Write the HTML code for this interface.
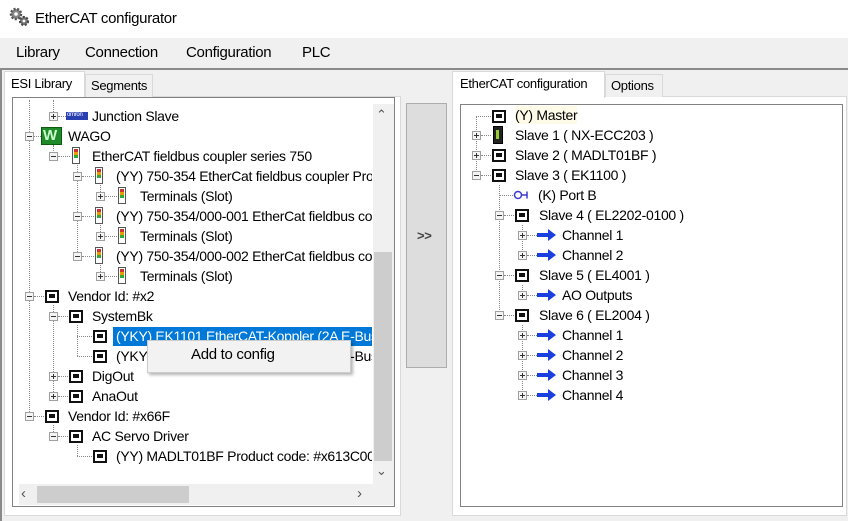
<!DOCTYPE html>
<html><head><meta charset="utf-8"><style>
*{margin:0;padding:0;box-sizing:border-box}
html,body{width:848px;height:521px;overflow:hidden}
body{background:#f0f0f0;font-family:"Liberation Sans",sans-serif;position:relative;color:#000}
.a{position:absolute}
.t{position:absolute;font-size:14px;white-space:nowrap;line-height:18px;letter-spacing:-0.3px}
.ex{position:absolute;width:9px;height:9px;border:1px solid #a0a0a0;background:#f4f4f4}
.ex::before{content:"";position:absolute;left:1px;top:3px;width:5px;height:1px;background:#333}
.ex.p::after{content:"";position:absolute;left:3px;top:1px;width:1px;height:5px;background:#333}
.ch{position:absolute;width:14px;height:13px;border:2px solid #111;background:#fff}
.ch::after{content:"";position:absolute;left:2px;top:2px;right:2px;bottom:3px;background:#111}
.cp{position:absolute;width:8px;height:17px;border:1px solid #555;background:#fff}
.cp::before{content:"";position:absolute;left:1px;top:1px;width:4px;height:9px;background:linear-gradient(#c33 0 3px,#e90 3px 6px,#3a3 6px)}
.hd{position:absolute;border-top:1px dotted #888;height:0}
.vd{position:absolute;border-left:1px dotted #888;width:0}
.ar{position:absolute}
</style></head><body>
<div class="a" style="left:0;top:0;width:848px;height:38px;background:#fff"></div>
<svg class="a" style="left:9px;top:7px" width="22" height="20" viewBox="0 0 22 20"><circle cx="7" cy="7" r="5" fill="#888" stroke="#555" stroke-dasharray="2 1.5" stroke-width="2.5"/><circle cx="7" cy="7" r="1.8" fill="#fff"/><circle cx="15" cy="14" r="4" fill="#777" stroke="#444" stroke-dasharray="2 1.5" stroke-width="2.2"/><circle cx="15" cy="14" r="1.4" fill="#fff"/></svg>
<div class="t" style="left:35px;top:10px;font-size:15px">EtherCAT configurator</div>
<div class="a" style="left:0;top:38px;width:848px;height:31px;background:#f0f0f0"></div>
<div class="t" style="left:16px;top:44px;font-size:15px">Library</div>
<div class="t" style="left:85px;top:44px;font-size:15px">Connection</div>
<div class="t" style="left:186px;top:44px;font-size:15px">Configuration</div>
<div class="t" style="left:302px;top:44px;font-size:15px">PLC</div>
<div class="a" style="left:0;top:68px;width:848px;height:2px;background:#8a8a8a"></div>
<div class="a" style="left:0;top:68px;width:2px;height:453px;background:#8a8a8a"></div>
<div class="a" style="left:4px;top:96px;width:397px;height:420px;background:#fff;border:1px solid #d9d9d9"></div>
<div class="a" style="left:4px;top:71px;width:81px;height:27px;background:#fff;border:1px solid #d9d9d9;border-bottom:none"></div>
<div class="t" style="left:11px;top:75px;font-size:13px">ESI Library</div>
<div class="a" style="left:85px;top:74px;width:68px;height:23px;background:#f0f0f0;border:1px solid #d9d9d9;border-bottom:none"></div>
<div class="t" style="left:91px;top:77px;font-size:13px">Segments</div>
<div class="a" style="left:12px;top:97px;width:383px;height:410px;border:1px solid #828282;background:#fff;overflow:hidden">
 <div class="a" style="left:360px;top:6px;width:21px;height:380px;background:#f0f0f0"></div>
 <div class="a" style="left:361px;top:154px;width:18px;height:209px;background:#cdcdcd"></div>
 <div class="t" style="left:363px;top:8px;font-size:13px;color:#555">&#8963;</div>
 <div class="t" style="left:363px;top:364px;font-size:13px;color:#555">&#8964;</div>
 <div class="a" style="left:6px;top:386px;width:375px;height:21px;background:#f0f0f0"></div>
 <div class="a" style="left:24px;top:388px;width:152px;height:17px;background:#cdcdcd"></div>
 <div class="t" style="left:8px;top:387px;font-size:15px;color:#555">&lsaquo;</div>
 <div class="t" style="left:344px;top:387px;font-size:15px;color:#555">&rsaquo;</div>
</div>
<div class="a" style="left:13px;top:98px;width:359px;height:386px;overflow:hidden">
<div style="position:absolute;left:-13px;top:-98px;width:380px;height:480px">
 <div class="vd" style="left:29px;top:100px;height:196px"></div>
 <div class="vd" style="left:29px;top:300px;height:116px"></div>
 <div class="vd" style="left:53px;top:145px;height:10px"></div>
 <div class="vd" style="left:77px;top:165px;height:91px"></div>
 <div class="vd" style="left:100px;top:185px;height:11px"></div>
 <div class="vd" style="left:100px;top:225px;height:11px"></div>
 <div class="vd" style="left:100px;top:265px;height:11px"></div>
 <div class="vd" style="left:53px;top:305px;height:91px"></div>
 <div class="vd" style="left:77px;top:325px;height:31px"></div>
 <div class="vd" style="left:53px;top:425px;height:11px"></div>
 <div class="vd" style="left:77px;top:445px;height:11px"></div>
 <div class="vd" style="left:53px;top:100px;height:16px"></div>
 <div class="ex p" style="left:49px;top:112px"></div><div class="hd" style="left:58px;top:116px;width:8px"></div>
 <div class="a" style="left:66px;top:112px;width:22px;height:8px;background:#2a3fb0"></div><div class="t" style="left:67px;top:110px;font-size:6px;color:#fff;line-height:10px">omron</div>
 <div class="t" style="left:92px;top:107px">Junction Slave</div>
 <div class="ex" style="left:25px;top:132px"></div><div class="hd" style="left:34px;top:136px;width:7px"></div>
 <div class="a" style="left:41px;top:127px;width:21px;height:18px;background:#1f8a2a;border:1px solid #0a5a10"></div><div class="t" style="left:43px;top:127px;font-size:15px;font-weight:bold;color:#cfc">W</div>
 <div class="t" style="left:68px;top:127px">WAGO</div>
 <div class="ex" style="left:49px;top:152px"></div><div class="hd" style="left:58px;top:156px;width:12px"></div>
 <div class="cp" style="left:72px;top:147px"></div><div class="t" style="left:92px;top:147px">EtherCAT fieldbus coupler series 750</div>
 <div class="ex" style="left:73px;top:172px"></div><div class="hd" style="left:82px;top:176px;width:12px"></div>
 <div class="cp" style="left:95px;top:167px"></div><div class="t" style="left:116px;top:167px">(YY) 750-354 EtherCat fieldbus coupler Product</div>
 <div class="ex p" style="left:96px;top:192px"></div><div class="hd" style="left:105px;top:196px;width:12px"></div>
 <div class="cp" style="left:118px;top:187px"></div><div class="t" style="left:140px;top:187px">Terminals (Slot)</div>
 <div class="ex" style="left:73px;top:212px"></div><div class="hd" style="left:82px;top:216px;width:12px"></div>
 <div class="cp" style="left:95px;top:207px"></div><div class="t" style="left:116px;top:207px">(YY) 750-354/000-001 EtherCat fieldbus coupler</div>
 <div class="ex p" style="left:96px;top:232px"></div><div class="hd" style="left:105px;top:236px;width:12px"></div>
 <div class="cp" style="left:118px;top:227px"></div><div class="t" style="left:140px;top:227px">Terminals (Slot)</div>
 <div class="ex" style="left:73px;top:252px"></div><div class="hd" style="left:82px;top:256px;width:12px"></div>
 <div class="cp" style="left:95px;top:247px"></div><div class="t" style="left:116px;top:247px">(YY) 750-354/000-002 EtherCat fieldbus coupler</div>
 <div class="ex p" style="left:96px;top:272px"></div><div class="hd" style="left:105px;top:276px;width:12px"></div>
 <div class="cp" style="left:118px;top:267px"></div><div class="t" style="left:140px;top:267px">Terminals (Slot)</div>
 <div class="ex" style="left:25px;top:292px"></div><div class="hd" style="left:34px;top:296px;width:10px"></div>
 <div class="ch" style="left:45px;top:290px"></div><div class="t" style="left:68px;top:287px">Vendor Id: #x2</div>
 <div class="ex" style="left:49px;top:312px"></div><div class="hd" style="left:58px;top:316px;width:10px"></div>
 <div class="ch" style="left:69px;top:310px"></div><div class="t" style="left:92px;top:307px">SystemBk</div>
 <div class="hd" style="left:77px;top:336px;width:15px"></div>
 <div class="ch" style="left:93px;top:330px"></div>
 <div class="a" style="left:113px;top:327px;width:270px;height:19px;background:#0078d7"></div>
 <div class="t" style="left:116px;top:327px;color:#fff">(YKY) EK1101 EtherCAT-Koppler (2A E-Bus, ID switch)</div>
 <div class="hd" style="left:77px;top:356px;width:15px"></div>
 <div class="ch" style="left:93px;top:350px"></div><div class="t" style="left:116px;top:347px">(YKY) EK1100 EtherCAT-Koppler (2A E-Bus)</div>
 <div class="ex p" style="left:49px;top:372px"></div><div class="hd" style="left:58px;top:376px;width:10px"></div>
 <div class="ch" style="left:69px;top:370px"></div><div class="t" style="left:92px;top:367px">DigOut</div>
 <div class="ex p" style="left:49px;top:392px"></div><div class="hd" style="left:58px;top:396px;width:10px"></div>
 <div class="ch" style="left:69px;top:390px"></div><div class="t" style="left:92px;top:387px">AnaOut</div>
 <div class="ex" style="left:25px;top:412px"></div><div class="hd" style="left:34px;top:416px;width:10px"></div>
 <div class="ch" style="left:45px;top:410px"></div><div class="t" style="left:68px;top:407px">Vendor Id: #x66F</div>
 <div class="ex" style="left:49px;top:432px"></div><div class="hd" style="left:58px;top:436px;width:10px"></div>
 <div class="ch" style="left:69px;top:430px"></div><div class="t" style="left:92px;top:427px">AC Servo Driver</div>
 <div class="hd" style="left:77px;top:456px;width:15px"></div>
 <div class="ch" style="left:93px;top:450px"></div><div class="t" style="left:116px;top:447px">(YY) MADLT01BF Product code: #x613C0000</div>
</div></div>
<div class="a" style="left:147px;top:340px;width:204px;height:33px;background:#f2f2f2;border:1px solid #ccc;box-shadow:2px 2px 3px rgba(0,0,0,0.3)"></div>
<div class="t" style="left:191px;top:346px;font-size:15px">Add to config</div>
<div class="a" style="left:406px;top:103px;width:41px;height:265px;background:#dddddd;border:1px solid #adadad"></div>
<div class="t" style="left:417px;top:227px;font-size:13px;color:#444;font-weight:bold">&gt;&gt;</div>
<div class="a" style="left:452px;top:96px;width:395px;height:420px;background:#fff;border:1px solid #d9d9d9"></div>
<div class="a" style="left:452px;top:71px;width:153px;height:27px;background:#fff;border:1px solid #d9d9d9;border-bottom:none"></div>
<div class="t" style="left:460px;top:75px;font-size:13px">EtherCAT configuration</div>
<div class="a" style="left:605px;top:74px;width:58px;height:23px;background:#f0f0f0;border:1px solid #d9d9d9;border-bottom:none"></div>
<div class="t" style="left:611px;top:77px;font-size:13px">Options</div>
<div class="a" style="left:460px;top:104px;width:383px;height:403px;border:1px solid #828282;background:#fff"></div>
<div class="vd" style="left:476px;top:116px;height:60px"></div>
<div class="vd" style="left:499px;top:185px;height:131px"></div>
<div class="vd" style="left:522px;top:225px;height:31px"></div>
<div class="vd" style="left:522px;top:285px;height:11px"></div>
<div class="vd" style="left:522px;top:325px;height:71px"></div>
<div class="hd" style="left:476px;top:116px;width:15px"></div>
<div class="ch" style="left:492px;top:110px"></div><div class="t" style="left:515px;top:106px;background:#fdfbe8">(Y) Master</div>
<div class="ex p" style="left:472px;top:131px"></div><div class="hd" style="left:481px;top:135px;width:10px"></div>
<div class="a" style="left:493px;top:126px;width:10px;height:18px;background:#222;border:1px solid #000"></div><div class="a" style="left:496px;top:130px;width:3px;height:9px;background:#9c3"></div>
<div class="t" style="left:515px;top:126px">Slave 1 ( NX-ECC203 )</div>
<div class="ex p" style="left:472px;top:151px"></div><div class="hd" style="left:481px;top:155px;width:10px"></div>
<div class="ch" style="left:492px;top:149px"></div><div class="t" style="left:515px;top:146px">Slave 2 ( MADLT01BF )</div>
<div class="ex" style="left:472px;top:171px"></div><div class="hd" style="left:481px;top:175px;width:10px"></div>
<div class="ch" style="left:492px;top:169px"></div><div class="t" style="left:515px;top:166px">Slave 3 ( EK1100 )</div>
<div class="hd" style="left:499px;top:195px;width:16px"></div>
<svg class="ar" style="left:513px;top:190px" width="16" height="10"><circle cx="5" cy="5" r="3.5" fill="none" stroke="#3b3bd0" stroke-width="1.5"/><path d="M8.5 5H14M14 1.5V8.5" stroke="#3b3bd0" stroke-width="1.5" fill="none"/></svg>
<div class="t" style="left:538px;top:186px">(K) Port B</div>
<div class="ex" style="left:495px;top:211px"></div><div class="hd" style="left:504px;top:215px;width:10px"></div>
<div class="ch" style="left:515px;top:209px"></div><div class="t" style="left:539px;top:206px">Slave 4 ( EL2202-0100 )</div>
<div class="ex" style="left:495px;top:271px"></div><div class="hd" style="left:504px;top:275px;width:10px"></div>
<div class="ch" style="left:515px;top:269px"></div><div class="t" style="left:539px;top:266px">Slave 5 ( EL4001 )</div>
<div class="ex" style="left:495px;top:311px"></div><div class="hd" style="left:504px;top:315px;width:10px"></div>
<div class="ch" style="left:515px;top:309px"></div><div class="t" style="left:539px;top:306px">Slave 6 ( EL2004 )</div>
<div class="ex p" style="left:518px;top:231px"></div><div class="hd" style="left:527px;top:235px;width:10px"></div>
<svg class="ar" style="left:537px;top:229px" width="20" height="12"><path d="M0 6H12" stroke="#1a3fe0" stroke-width="4"/><path d="M11 0L19 6L11 12Z" fill="#1a3fe0"/></svg><div class="t" style="left:562px;top:226px">Channel 1</div>
<div class="ex p" style="left:518px;top:251px"></div><div class="hd" style="left:527px;top:255px;width:10px"></div>
<svg class="ar" style="left:537px;top:249px" width="20" height="12"><path d="M0 6H12" stroke="#1a3fe0" stroke-width="4"/><path d="M11 0L19 6L11 12Z" fill="#1a3fe0"/></svg><div class="t" style="left:562px;top:246px">Channel 2</div>
<div class="ex p" style="left:518px;top:291px"></div><div class="hd" style="left:527px;top:295px;width:10px"></div>
<svg class="ar" style="left:537px;top:289px" width="20" height="12"><path d="M0 6H12" stroke="#1a3fe0" stroke-width="4"/><path d="M11 0L19 6L11 12Z" fill="#1a3fe0"/></svg><div class="t" style="left:562px;top:286px">AO Outputs</div>
<div class="ex p" style="left:518px;top:331px"></div><div class="hd" style="left:527px;top:335px;width:10px"></div>
<svg class="ar" style="left:537px;top:329px" width="20" height="12"><path d="M0 6H12" stroke="#1a3fe0" stroke-width="4"/><path d="M11 0L19 6L11 12Z" fill="#1a3fe0"/></svg><div class="t" style="left:562px;top:326px">Channel 1</div>
<div class="ex p" style="left:518px;top:351px"></div><div class="hd" style="left:527px;top:355px;width:10px"></div>
<svg class="ar" style="left:537px;top:349px" width="20" height="12"><path d="M0 6H12" stroke="#1a3fe0" stroke-width="4"/><path d="M11 0L19 6L11 12Z" fill="#1a3fe0"/></svg><div class="t" style="left:562px;top:346px">Channel 2</div>
<div class="ex p" style="left:518px;top:371px"></div><div class="hd" style="left:527px;top:375px;width:10px"></div>
<svg class="ar" style="left:537px;top:369px" width="20" height="12"><path d="M0 6H12" stroke="#1a3fe0" stroke-width="4"/><path d="M11 0L19 6L11 12Z" fill="#1a3fe0"/></svg><div class="t" style="left:562px;top:366px">Channel 3</div>
<div class="ex p" style="left:518px;top:391px"></div><div class="hd" style="left:527px;top:395px;width:10px"></div>
<svg class="ar" style="left:537px;top:389px" width="20" height="12"><path d="M0 6H12" stroke="#1a3fe0" stroke-width="4"/><path d="M11 0L19 6L11 12Z" fill="#1a3fe0"/></svg><div class="t" style="left:562px;top:386px">Channel 4</div>
</body></html>
